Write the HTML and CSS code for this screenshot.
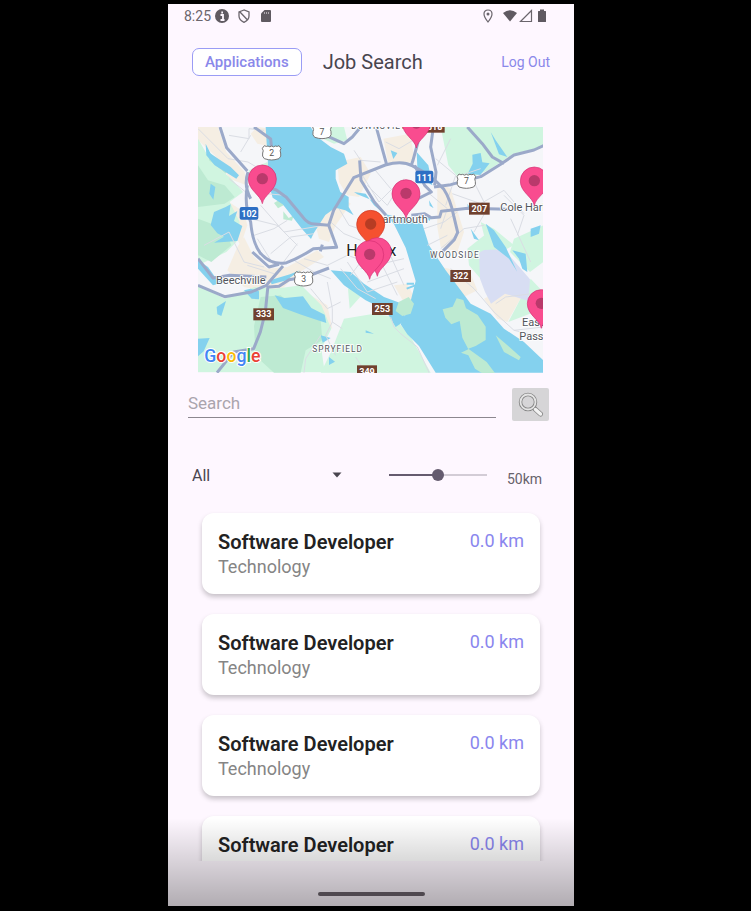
FILE: index.html
```html
<!DOCTYPE html>
<html lang="en">
<head>
<meta charset="utf-8">
<meta name="viewport" content="width=device-width, initial-scale=1">
<title>Job Search</title>
<link rel="stylesheet" href="styles.css">
</head>
<body>
<div class="phone">
  <div class="status">
    <span class="clock">8:25</span>
    <svg class="ic" viewBox="0 0 14 14"><circle cx="7" cy="7" r="7" fill="#5f5a61"/><path d="M5.500 6H8v5M5.500 11h4M6.300 3.500h1.700" stroke="#fef7ff" stroke-width="1.800" fill="none"/></svg>
    <svg class="ic shield" viewBox="0 0 14 14" fill="none" stroke="#6a656c" stroke-width="1.300"><path d="M7 1 2 3v4c0 3 2 5 5 6.300C10 12 12 10 12 7V3zM3 3l7.500 8"/></svg>
    <svg class="ic sd" viewBox="0 0 14 14"><path d="M5.500 1H11q1 0 1 1v10q0 1-1 1H3q-1 0-1-1V4.500z" fill="#5f5a61"/><path d="M5.500 3v2M7.500 3v2M9.500 3v2" stroke="#fef7ff" stroke-width=".5"/></svg>
    <span class="spacer"></span>
    <svg class="ic pin" viewBox="0 0 14 14"><path d="M7 1C4.500 1 3 2.800 3 5c0 3 4 8 4 8s4-5 4-8c0-2.200-1.500-4-4-4z" fill="none" stroke="#6a656c" stroke-width="1.200"/><circle cx="7" cy="5" r="1.500" fill="#6a656c"/></svg>
    <svg class="ic wifi" viewBox="0 0 14 14"><path d="M0 4Q7-1.500 14 4L7 12.500z" fill="#5f5a61"/></svg>
    <svg class="ic" viewBox="0 0 14 14"><path d="M12.500 1.500v11h-11z" fill="none" stroke="#6a656c" stroke-width="1.200"/></svg>
    <svg class="ic battery" viewBox="0 0 14 14"><path d="M5 .5h4V2h1.500q.5 0 .5.500v10q0 .5-.5.500h-7q-.5 0-.5-.5v-10q0-.5.5-.5H5z" fill="#5f5a61"/></svg>
  </div>

  <header class="bar">
    <button class="apps" type="button">Applications</button>
    <h1>Job Search</h1>
    <a class="logout" href="#">Log Out</a>
  </header>

  <svg class="map" viewBox="0 0 1035 738" preserveAspectRatio="xMidYMid slice" role="img" aria-label="Map of jobs around Halifax">
    <defs>
      <g id="marker"><path d="M0 0C-4-26-42-40-42-74a42 42 0 0 1 84 0C42-40 4-26 0 0z"/><circle cy="-75" r="17"/></g>
      <path id="us" d="M-22-21q6 4 11 1 6 5 11 0 5 5 11 0 6 3 11-1l6 8q-5 8-1 14 3 10-5 17-13 4-22 4t-22-4q-8-7-5-17 4-6-1-14z"/>
    </defs>
    <rect width="1035" height="738" fill="#f5f6f9"/>

    <g transform="translate(-12 -15)">
      <g class="sand">
        <path d="M12 15h60l25 75 55 60 5 40-50-20-45-70-50-45z"/>
        <path d="M190 15l70 10-25 50-45-10-20-30z"/>
        <path d="M430 120l70-15 30 50-35 70-35-5-25-40z"/>
        <path d="M365 310l45-60 40-20 20 15-45 65-20 50-30-10z"/>
        <path d="M105 240l45 30 10 40-20 60-25-40z"/>
        <path d="M150 345l30 60 40 35 60-5 90-50 20 20-80 50-60 60-100-20-50-50 30-70z"/>
        <path d="M350 520l50 30 15 70-50-35z"/>
        <path d="M568 50l80-15 15 85-80 5z"/>
        <path d="M730 180l40 20 40 130-20 60-50-15-10-60z"/>
        <path d="M720 430l110 25 20 50-40 20-50-40z"/>
        <path d="M870 530l50-25 65 15-45 80-30-10z"/>
        <path d="M600 490l40-5 25 50-30 15z"/>
      </g>
      <g class="green">
        <path d="M12 50l40 70 60 50 35 40-40 30 30 60-10 60-30 30-85 40z"/>
        <path d="M165 145l55-25 15 40-35 20-35-10z"/>
        <path d="M360 15h90l10 40-40 10-45-20z"/>
        <path d="M12 490l80 40 90-35 60 5 80-10 60 60 30 70-30 60 10 70H12z"/>
        <path d="M450 590l90-15 60 10 50 60 60 107H380l30-60z"/>
        <path d="M740 15h308v60l-90 20-75 50-80 35-40-50z"/>
        <path d="M960 350l88-40v110l-40 30-60-60z"/>
        <path d="M820 380l70-55 35 50-50 25-15 70-35-40z"/>
        <path d="M985 520l25-50 38 40v50l-105 40zM860 300l40 20 60 50-40 20-50-50z"/>
        <path d="M462 500l40-20 10 30-45 50z"/>
      </g>
      <g class="wood">
        <path d="M12 130l30 45 50 15 30 35-30 20-80 10zM12 290l80 30 20 50-60 50-40-20z"/>
        <path d="M200 525l60-5 60 55 60 20 5 60-50 30-15 67h-80l-55-50-5-90z"/>
        <path d="M45 90l60 50-10 15-50-40zM240 243l20-12 14 16-22 12zM268 268l16 20 12-6-2-16 6 10-6 20-26-4z"/>
        <path d="M900 480l20-30 50 5-20 30z"/>
      </g>
      <path d="M855 392l15-8 60-2 78 90-5 65-70-22-42 30-18-35-15-40z" fill="#d8def3"/>

      <g class="water">
        <path d="M215 15H350l20 30 40 30 40 20 10 30-35 20 0 25 14 40 25 15 0 30 15 25-25-15-30-8-30 22-35 55-8 17-25-28-60-76-30-20-10-35z"/>
        <path d="M480 210l35 5 25 35 30 25 60 15 55 15 20 65 50 75 45 60 30 40 60 30 40 45 60 40 58 55v37H725l-50-80-35-35-20-30 25-50 20-80-30-100-35-70-60-70-50-20z"/>
        <path d="M410 445l60 5 40 35 60 40 55 20 10 50-30 20-30-50-60-30-65-45z"/>
        <path d="M242 520l30 8 55-5 25 35 40 20 5 25-30-10-45-15-55-20z"/>
        <path d="M35 65l15 30 60 40 25 25-8 10-65-40-25-30zM50 185l14 10-6 38-12-18zM60 270l35-15 15-8-5 35 25-15-10 30 25 15-15 45-70 5 30-18-20-10-20-25z"/>
        <path d="M150 505l20-5 25 8v24l-22-2zM68 555l28-18-14 45-12-5zM12 415l30 20 25 35 45 5-55 15-45-50zM228 475l60-18 30-12-40 30-45 12zM12 650l35-2-18 40-17 15z"/>
        <path d="M668 90l35 40 12 60-25-15-20-40zM835 98l25-5 5 28 22 3-28 35-38-4 15-30zM590 85l20 8-12 18zM890 30l15 25 35 50-25-8zM705 235l14 24-12-8zM690 275l24 10-8 12z"/>
        <path d="M875 305l25 20 35 50 35 75-25-40-45-35zM955 385l40 10 5 55-15-10-10-30zM1010 320l30-10-5 25-25 10zM830 320l25 35-15-5zM820 245l14 20-12-4zM380 640l30 8-24 14zM405 705l18 14-18 10zM515 625l25 10-25-3z"/>
      </g>
      <path class="wood" d="M746 562l30-8 12-25 20 5 8 25 35 20 24 35 0 40-30 18-22 8 55 40 45 60 0 15-25-20-55-35-20-40-22-8 22-10-18-35-8-50-25 10-18-20z"/>
      <path class="wood" d="M905 640l30 25 45 40-5 10-45-25zM614 540l30-15 16 20-10 30-25 7-20-15z"/>
      <path d="M638 500l26-10M638 485l22 0" stroke="#84d1ee" stroke-width="6"/>

      <g class="minor">
        <path d="M12 20l90 90 60 10 50 30M105 40l60 10 0-30 45 5M140 90l30-50M105 170l50 40M215 215l60 5M170 290l80 20 60 60M200 250l70 80 60-10 60-10M180 340l60-20 40-25M230 395l60-50 70-10M265 425l45-60M30 370l75-40 45 90 60 15M190 350l50 80M160 430l80 25M300 415l60 35 50 20"/>
        <path d="M410 300l40 35 50 20M435 260l30 50 30 10M330 410l70 20 60-30 30 10M400 480l15 80 0 40 30 20M350 500l50 60 40-20M415 600l-20 40 30 60M440 440l50 60 55 30M460 420l60 90 90-30M500 440l130-30M520 480l110-40M550 400l60 120M580 380l50 110M470 460l30-40M380 640l-45 70-5 42"/>
        <path d="M480 85l20 30 60 5M505 160l50 80 40-40 40 20M520 190l60 60 50-80M540 140l50 60M575 60l40 20 50-30M725 110l60 50-30 90M770 50l-40 80M775 215l85 30 70-40 60 70M840 180l40 80-40 70M700 210l60 50-20 60M690 320l60-20 40-30M700 370l60-30M930 220l60 60-20 60M800 160l60-20M740 380l70-60 60-10M950 290l60 130"/>
        <path d="M770 440l70 60 60 70 60 55 88 20M905 545l30-20 80-10M590 585l10 30 20 20 50 40 35 77M960 625l88-10M485 705l30 47"/>
      </g>
      <g class="road">
        <path d="M78 15l20 62 62 70M170 230q-22-40-8-80M160 190q-10 60 10 110 5 60 28 92 34 40 80 30 40-15 80-42l70-4-24-66-42-4q-20 0-35-20l-50-60-30-22-30-10"/>
        <path d="M180 15l50 36 5 50M404 310l15-45 60-98 95-38q50-15 80 2 60 30 95 70 20 30 30 80l12 50-10 22-35 35"/>
        <path d="M395 40l55 25 25-20 25-30M497 115l4 60 40 65 35 40M548 20l30 108M672 60l-15 55-5 15M718 15l-8 60 16 75-4 40M662 130l30 60 20 20-40 20"/>
        <path d="M720 195l50-7 90-24 60-37 40-28 60-15 30-14M820 15l45 50 30 40 35 20"/>
        <path d="M652 280l40-5 20 12 25-2 5-17 80-9 120 3"/>
        <path d="M12 490l80 34 80-14 45-20 50-58M12 410l45 58 50-8 110 5M225 495l30-2 30-20 50-8 70-27M175 390l50 45 30-8M385 368l-6 20"/>
        <path d="M222 490l-8 80-15 60-20 50-60 10-50 62"/>
      </g>
    </g>

    <g class="place">
      <text x="460" y="6" class="caps">DOWNSVIEW</text>
      <text x="532" y="289">Dartmouth</text>
      <text x="907" y="251">Cole Harbour</text>
      <text x="54" y="472">Beechville</text>
      <text x="445" y="387" class="city">Halifax</text>
      <text x="696" y="394" class="caps">WOODSIDE</text>
      <text x="343" y="676" class="caps">SPRYFIELD</text>
      <text x="972" y="598">Eastern</text>
      <text x="964" y="638">Passage</text>
    </g>

    <g class="shields">
      <use href="#us" x="221" y="77"/><use href="#us" x="372" y="13"/><use href="#us" x="805" y="162"/><use href="#us" x="317" y="455"/>
      <text x="221" y="87">2</text><text x="372" y="23">7</text><text x="805" y="172">7</text><text x="317" y="465">3</text>
    </g>
    <g class="blue">
      <rect x="125" y="240" width="56" height="38" rx="6"/><rect x="652" y="131" width="54" height="38" rx="6"/>
      <text x="153" y="270">102</text><text x="679" y="161">111</text>
    </g>
    <g class="brown">
      <rect x="680" y="-20" width="60" height="37"/><rect x="813" y="227" width="62" height="36"/><rect x="757" y="429" width="62" height="36"/><rect x="522" y="528" width="62" height="36"/><rect x="166" y="544" width="62" height="36"/><rect x="477" y="715" width="60" height="37"/>
      <text x="710" y="10">318</text><text x="844" y="255">207</text><text x="788" y="457">322</text><text x="553" y="556">253</text><text x="197" y="571">333</text><text x="507" y="743">349</text>
    </g>

    <g class="pink">
      <use href="#marker" x="193" y="230"/><use href="#marker" x="655" y="63"/><use href="#marker" x="624" y="274"/><use href="#marker" x="1009" y="236"/><use href="#marker" x="1030" y="604"/>
    </g>
    <use href="#marker" class="red" x="518" y="366"/>
    <g class="pink"><use href="#marker" x="538" y="448"/><use href="#marker" x="515" y="457"/></g>

    <text class="google" x="19" y="704"><tspan fill="#4285f4">G</tspan><tspan fill="#ea4335">o</tspan><tspan fill="#fbbc05">o</tspan><tspan fill="#4285f4">g</tspan><tspan fill="#34a853">l</tspan><tspan fill="#ea4335">e</tspan></text>
  </svg>

  <form class="search">
    <input type="search" placeholder="Search" aria-label="Search">
    <button type="button" aria-label="Run search">
      <svg viewBox="0 0 26 26" fill="none"><path d="M17 17l5.500 5" stroke="#858585" stroke-width="5" stroke-linecap="round"/><circle cx="10" cy="10" r="7.500" stroke="#858585" stroke-width="3.500"/><path d="M14.500 14.500l3 3" stroke="#858585" stroke-width="3"/><path d="M17.500 17.500l5 4.500" stroke="#f2f2f2" stroke-width="3.500" stroke-linecap="round"/><circle cx="10" cy="10" r="7.500" stroke="#e4e4e4" stroke-width="1.800"/></svg>
    </button>
  </form>

  <div class="filters">
    <div class="pick">
      <select aria-label="Category"><option>All</option></select>
      <svg viewBox="0 0 10 6"><path d="M.5.5h9L5 5.500z" fill="#49454f"/></svg>
    </div>
    <input id="radius" type="range" min="0" max="100" value="50" aria-label="Distance">
    <label for="radius">50km</label>
  </div>

  <main class="jobs">
    <article class="job"><div><h2>Software Developer</h2><p>Technology</p></div><span class="dist">0.0 km</span></article>
    <article class="job"><div><h2>Software Developer</h2><p>Technology</p></div><span class="dist">0.0 km</span></article>
    <article class="job"><div><h2>Software Developer</h2><p>Technology</p></div><span class="dist">0.0 km</span></article>
    <article class="job"><div><h2>Software Developer</h2><p>Technology</p></div><span class="dist">0.0 km</span></article>
  </main>

  <div class="home"><span></span></div>
</div>
</body>
</html>
```
FILE: styles.css
```css
* { box-sizing: border-box; }

body {
  margin: 0;
  padding: 4px 9px 5px 0;
  background: #000;
  color: #49454f;
  font-family: Roboto, "Liberation Sans", sans-serif;
}

h1, h2, p { margin: 0; font-weight: 400; }
button, input, select { font: inherit; color: inherit; margin: 0; }

.phone {
  position: relative;
  display: flex;
  flex-direction: column;
  max-width: 406px;
  height: calc(100vh - 9px);
  margin: 0 auto;
  background: #fef7ff;
  overflow: hidden;
}

.phone::after {
  content: "";
  position: absolute;
  inset: auto 0 0;
  height: 88px;
  background: linear-gradient(rgba(0, 0, 0, 0), rgba(0, 0, 0, .3));
  pointer-events: none;
}

.status {
  display: flex;
  align-items: center;
  height: 24px;
  padding: 0 25px 0 16px;
}
.clock { font-size: 14px; color: #6a656c; margin-right: 4px; }
.ic { width: 14px; height: 14px; }
.shield { margin-left: 8px; }
.sd { margin-left: 8px; }
.spacer { flex: 1; }
.pin { margin-right: 8px; }
.wifi { margin-right: 2px; }
.battery { margin-left: 2px; }

.bar {
  display: flex;
  align-items: center;
  margin: 20px 24px 0;
  height: 27px;
}
.apps {
  height: 28px;
  padding: 0 12px;
  border: 1px solid #9a9cf5;
  border-radius: 7px;
  background: #fff;
  color: #8a88ea;
  font-size: 15px;
  font-weight: 500;
}
.bar h1 { margin-left: 21px; font-size: 20px; }
.logout { margin-left: auto; font-size: 14px; color: #8a88ea; text-decoration: none; }

.map {
  display: block;
  height: 246px;
  margin: 52px 31px 0 30px;
}
.sand { fill: #f5eee3; }
.green { fill: #d0f5e0; }
.wood { fill: #bdead2; }
.water { fill: #84d1ee; }
.minor { fill: none; stroke: #dadde4; stroke-width: 3; }
.road { fill: none; stroke: #9ba9c9; stroke-width: 9; stroke-linejoin: round; }
.place text {
  fill: #51555c;
  stroke: #fff;
  stroke-width: 5;
  paint-order: stroke;
  font-size: 33px;
}
.place .caps { font-size: 25px; letter-spacing: 3px; }
.place .city { font-size: 48px; fill: #222; }
.shields { fill: #fff; stroke: #777; stroke-width: 3; }
.shields text { fill: #555; stroke: none; font-size: 26px; text-anchor: middle; }
.blue rect { fill: #2d6fc4; }
.brown rect { fill: #70412f; }
.blue text, .brown text { fill: #fff; font-size: 27px; font-weight: 700; text-anchor: middle; }
.pink, .red { stroke: #d52f73; stroke-width: 2; }
.pink { fill: #f94c8f; }
.red { fill: #f5512f; stroke: #c93822; }
#marker circle { fill: #000; fill-opacity: .25; stroke: none; }
.google {
  font-size: 53px;
  font-weight: 500;
  stroke: #fff;
  stroke-width: 6;
  paint-order: stroke;
}

.search {
  display: flex;
  justify-content: space-between;
  gap: 16px;
  margin: 15px 25px 0 20px;
}
.search input {
  flex: 1;
  min-width: 0;
  height: 30px;
  padding: 0;
  border: 0;
  border-bottom: 1px solid #8c878f;
  border-radius: 0;
  background: none;
  font-size: 17px;
  outline: 0;
  appearance: none;
}
.search input::placeholder { color: #aaa4ad; }
.search button {
  display: grid;
  place-items: center;
  width: 37px;
  height: 33px;
  padding: 0;
  border: 0;
  border-radius: 2px;
  background: #d6d5d7;
}
.search button svg { width: 26px; height: 26px; }

.filters {
  display: flex;
  align-items: center;
  height: 28px;
  margin: 40px 32px 0 24px;
}
.pick { display: flex; align-items: center; flex: 1; }
.pick select {
  flex: 1;
  padding: 0;
  border: 0;
  background: none;
  appearance: none;
  font-size: 16px;
}
.pick svg { width: 10px; height: 6px; }
.filters input {
  width: 98px;
  height: 12px;
  margin: 0 20px 0 47px;
  appearance: none;
  background: linear-gradient(90deg, #655b6f 50%, #d3ccd6 50%) center / 100% 2px no-repeat;
}
.filters input::-webkit-slider-thumb {
  appearance: none;
  width: 12px;
  height: 12px;
  border-radius: 50%;
  background: #655b6f;
}
.filters label { padding-top: 8px; font-size: 14px; color: #67626b; }

.jobs {
  display: flex;
  flex: 1;
  flex-direction: column;
  gap: 20px;
  min-height: 0;
  padding: 24px 34px 0;
  overflow: hidden;
}
.job {
  display: flex;
  flex: none;
  justify-content: space-between;
  padding: 16px 16px 15px;
  border-radius: 12px;
  background: #fff;
  box-shadow: 0 3px 5px rgba(0, 0, 0, .22);
}
.job h2 { font-size: 20px; line-height: 26px; font-weight: 600; color: #222; }
.job p { font-size: 18px; line-height: 24px; color: #858585; }
.dist { font-size: 18px; line-height: 24px; color: #8a86ee; }

.home {
  display: flex;
  flex: none;
  justify-content: center;
  align-items: center;
  height: 45px;
  padding-top: 21px;
}
.home span { width: 107px; height: 4px; border-radius: 2px; background: #6b626b; }
```
